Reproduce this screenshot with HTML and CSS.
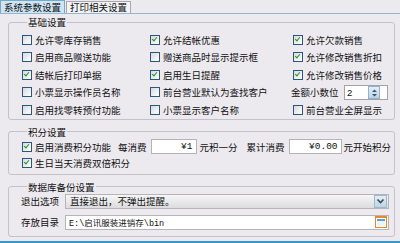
FILE: index.html
```html
<!DOCTYPE html>
<html lang="zh-CN">
<head>
  <meta charset="UTF-8">
  <title>系统参数设置</title>
  <link rel="stylesheet" href="styles.css">
</head>
<body>
  <div class="tabs">
    <div class="tab active">系统参数设置</div>
    <div class="tab">打印相关设置</div>
  </div>

  <div class="panel">
    <fieldset class="group basic">
      <legend>基础设置</legend>
      <div class="grid">
        <label class="chk"><span class="box"></span>允许零库存销售</label>
        <label class="chk"><span class="box on"></span>允许结帐优惠</label>
        <label class="chk"><span class="box on"></span>允许欠款销售</label>

        <label class="chk"><span class="box"></span>启用商品赠送功能</label>
        <label class="chk"><span class="box"></span>赠送商品时显示提示框</label>
        <label class="chk"><span class="box on"></span>允许修改销售折扣</label>

        <label class="chk"><span class="box on"></span>结帐后打印单据</label>
        <label class="chk"><span class="box on"></span>启用生日提醒</label>
        <label class="chk"><span class="box on"></span>允许修改销售价格</label>

        <label class="chk"><span class="box"></span>小票显示操作员名称</label>
        <label class="chk"><span class="box"></span>前台营业默认为查找客户</label>
        <div class="spin-row">
          <span class="spin-label">金额小数位</span>
          <div class="spin">
            <span class="spin-val">2</span>
            <span class="spin-btn">
              <svg width="9" height="12" viewBox="0 0 9 12"><path d="M2 5 L4.5 2.5 L7 5 Z M2 7 L4.5 9.5 L7 7 Z" fill="#3d5470"/></svg>
            </span>
          </div>
        </div>

        <label class="chk"><span class="box"></span>启用找零转预付功能</label>
        <label class="chk"><span class="box"></span>小票显示客户名称</label>
        <label class="chk"><span class="box"></span>前台营业全屏显示</label>
      </div>
    </fieldset>

    <fieldset class="group points">
      <legend>积分设置</legend>
      <div class="row">
        <label class="chk first"><span class="box on"></span>启用消费积分功能</label>
        <span>每消费</span>
        <span class="money m1">¥1</span>
        <span class="after">元积一分</span>
        <span class="sum-label">累计消费</span>
        <span class="money m2">¥0.00</span>
        <span class="after2">元开始积分</span>
      </div>
      <div class="row">
        <label class="chk"><span class="box on"></span>生日当天消费双倍积分</label>
      </div>
    </fieldset>

    <fieldset class="group backup">
      <legend>数据库备份设置</legend>
      <div class="frow">
        <span class="flabel">退出选项</span>
        <div class="select">
          <span class="select-text">直接退出，不弹出提醒。</span>
          <span class="drop-btn">
            <svg width="9" height="7" viewBox="0 0 9 7"><path d="M1.5 1.5 L4.5 4.5 L7.5 1.5" fill="none" stroke="#34495f" stroke-width="1.6"/></svg>
          </span>
        </div>
      </div>
      <div class="frow">
        <span class="flabel">存放目录</span>
        <div class="path">
          <span class="path-text">E:\启讯服装进销存\bin</span>
          <span class="browse-btn">
            <svg width="10" height="9" viewBox="0 0 10 9"><rect x="0.5" y="0.5" width="9" height="8" fill="#eaf4fb" stroke="#ffffff"/><rect x="1" y="1" width="8" height="2" fill="#5aa2d8"/></svg>
          </span>
        </div>
      </div>
    </fieldset>
  </div>

  <div class="bottom-line"></div>
</body>
</html>
```

FILE: styles.css
```css
body {
  margin: 0;
  height: 243px;
  overflow: hidden;
  display: flex;
  flex-direction: column;
  background-color: #ece9ef;
  font-family: "Noto Sans CJK SC", "Liberation Sans", sans-serif;
  font-size: 9.5px;
  color: #111;
}
.tabs {
  display: flex;
  align-items: flex-end;
  height: 13px;
  border-bottom: 1px solid #8fb8d4;
}
.tab {
  height: 11px;
  line-height: 11px;
  padding: 0 3px;
  margin-right: 1px;
  border: 1px solid #a9a7ae;
  border-bottom: none;
  background-color: #f3f2f5;
}
.tab.active {
  height: 12px;
  line-height: 12px;
  background-color: #cde5f5;
  border-color: #7ba7c7;
}
.panel {
  display: flex;
  flex-direction: column;
  padding: 2px 5px 0 8px;
}
.group {
  margin: 0;
  min-width: 0;
  border: 1px solid #c4c1c8;
  border-radius: 3px;
  padding: 0 0 0 13px;
}
.group legend {
  margin-left: 5px;
  padding: 0 1px;
  line-height: 12px;
}
.basic .grid {
  display: grid;
  grid-template-columns: 128px 143px 1fr;
  grid-auto-rows: 17.5px;
  padding-top: 3px;
}
.chk {
  display: flex;
  align-items: center;
  white-space: nowrap;
}
.box {
  position: relative;
  width: 8px;
  height: 8px;
  margin-right: 3px;
  border: 1px solid #2b5680;
  background: linear-gradient(135deg, #d9d9dc, #ffffff);
}
.box.on::after {
  content: "";
  position: absolute;
  left: 2px;
  top: 0px;
  width: 2px;
  height: 4px;
  border-right: 1.6px solid #1f9a22;
  border-bottom: 1.6px solid #1f9a22;
  transform: rotate(40deg);
}
.spin-row {
  display: flex;
  align-items: center;
  margin-left: -2px;
}
.spin-label {
  width: 53px;
}
.spin {
  display: flex;
  align-items: center;
  width: 42px;
  height: 13px;
  border: 1px solid #a3a3a8;
  background-color: #fff;
}
.spin-val {
  flex: 1;
  padding-left: 2px;
  font-family: "Liberation Sans", sans-serif;
}
.spin-btn {
  display: flex;
  justify-content: center;
  width: 10px;
  height: 11px;
  margin-right: 7px;
  border: 1px solid #8eb2cf;
  background: linear-gradient(#e4eef7, #bcd4e6);
}
.points {
  margin-top: 6px;
  padding-top: 1px;
  padding-bottom: 3px;
}
.row {
  display: flex;
  align-items: center;
  height: 16px;
  white-space: nowrap;
}
.row .first {
  width: 96px;
}
.money {
  height: 13px;
  line-height: 13px;
  margin-left: 4px;
  padding-right: 3px;
  text-align: right;
  border: 1px solid #b5b3b9;
  background-color: #fff;
  font-family: "Liberation Mono", "Noto Sans CJK SC", monospace;
}
.m1 {
  width: 41px;
}
.m2 {
  width: 48px;
}
.after {
  margin-left: 3px;
}
.sum-label {
  margin-left: 9px;
}
.after2 {
  margin-left: 2px;
}
.backup {
  margin-top: 6px;
  padding: 1px 5px 6px 13px;
}
.frow {
  display: flex;
  align-items: center;
  height: 15px;
}
.frow + .frow {
  margin-top: 6px;
}
.flabel {
  width: 44px;
  padding-left: 0;
  margin-left: -1px;
}
.select, .path {
  flex: 1;
  display: flex;
  align-items: center;
  height: 13px;
  border: 1px solid #b6b4b9;
}
.select {
  background: linear-gradient(#f6f6f7, #dcdcde);
}
.path {
  background-color: #fff;
}
.select-text {
  flex: 1;
  padding-left: 4px;
}
.path-text {
  flex: 1;
  padding-left: 3px;
  font-family: "Liberation Mono", "Noto Sans CJK SC", monospace;
  font-size: 8.5px;
}
.drop-btn, .browse-btn {
  display: flex;
  align-items: center;
  justify-content: center;
  width: 12px;
  height: 12px;
  margin-right: 1px;
}
.drop-btn {
  border: 1px solid #9db9d0;
  background: linear-gradient(#e6eef5, #bed3e4);
  width: 11px;
  height: 11px;
}
.browse-btn {
  background-color: #f0861e;
}
.bottom-line {
  margin-top: auto;
  height: 2px;
  background-color: #3a98cf;
}
```
